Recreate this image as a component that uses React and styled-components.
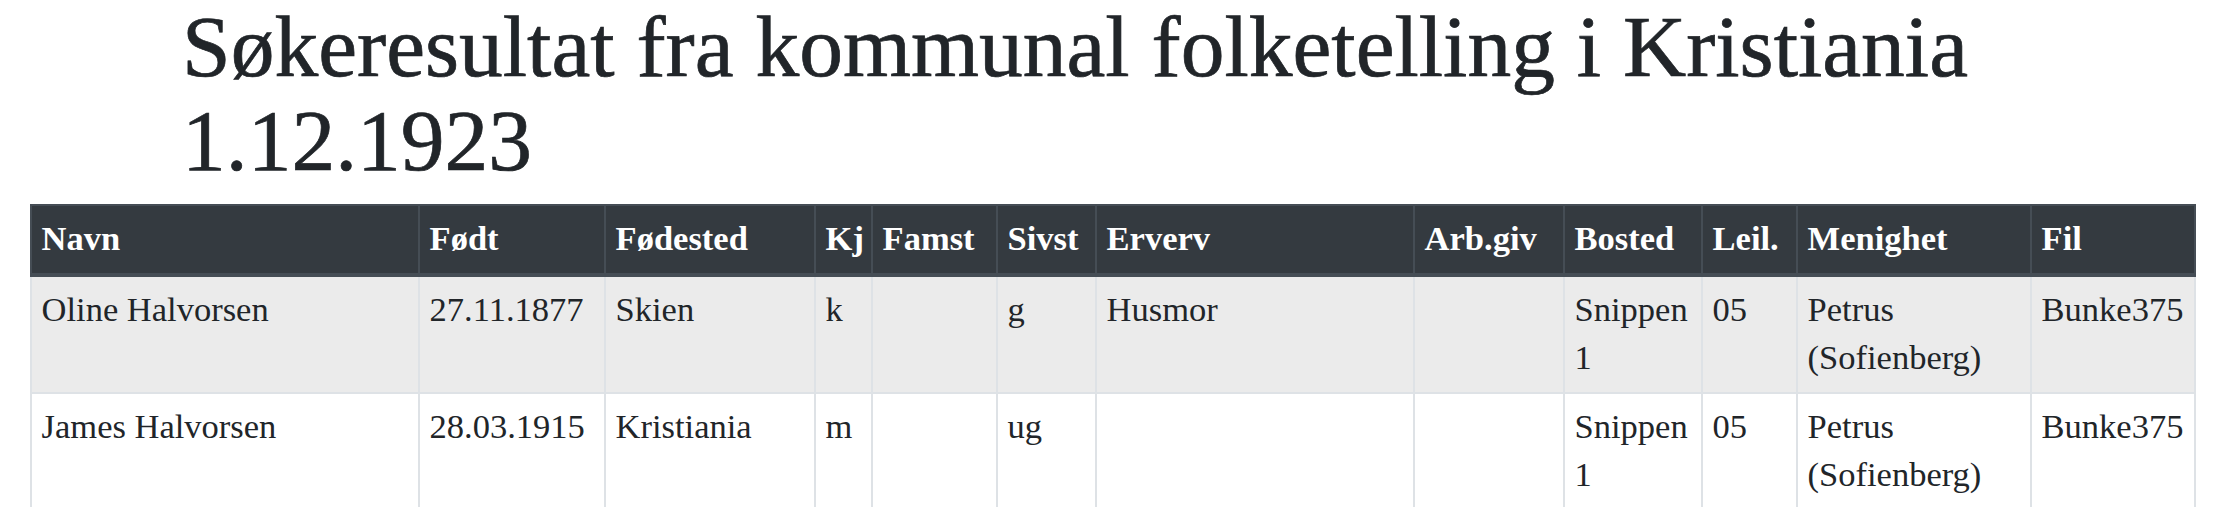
import styled, { createGlobalStyle } from 'styled-components'

const GlobalStyle = createGlobalStyle`
  * {
    box-sizing: border-box;
  }
  body {
    margin: 0;
    background: #fff;
    color: #212529;
    font-family: "Liberation Serif", "Times New Roman", serif;
    font-size: 34.5px;
    line-height: 48px;
  }
`

const Page = styled.div`
  padding: 0 30px;
`

const Title = styled.h1`
  margin: 0 0 16px;
  padding-left: 152px;
  font-family: "Liberation Serif", "Times New Roman", serif;
  font-size: 87.5px;
  font-weight: 400;
  line-height: 94px;
  color: #212529;
  -webkit-text-stroke: 0.7px #212529;
`

const Table = styled.table`
  width: 100%;
  table-layout: fixed;
  border-collapse: collapse;
  border: 2px solid #dee2e6;
`

const HeadCell = styled.th`
  width: ${props => props.$w}px;
  padding: 8px 9.6px 11px;
  text-align: left;
  vertical-align: bottom;
  font-weight: 700;
  color: #fff;
  background: #343a40;
  border: 2px solid #454d55;
  border-bottom-width: 4px;
  white-space: nowrap;
`

const Row = styled.tr`
  background: ${props => (props.$striped ? '#ebebeb' : '#fff')};
`

const Cell = styled.td`
  padding: 8px 9.6px 11px;
  vertical-align: top;
  border: 2px solid #dee2e6;
`

const columns = [
  ['Navn', 388],
  ['Født', 186],
  ['Fødested', 210],
  ['Kj', 57],
  ['Famst', 125],
  ['Sivst', 99],
  ['Erverv', 318],
  ['Arb.giv', 150],
  ['Bosted', 138],
  ['Leil.', 95],
  ['Menighet', 234],
  ['Fil', 164],
]

const people = [
  ['Oline Halvorsen', '27.11.1877', 'Skien', 'k', '', 'g', 'Husmor', '', 'Snippen 1', '05', 'Petrus (Sofienberg)', 'Bunke375'],
  ['James Halvorsen', '28.03.1915', 'Kristiania', 'm', '', 'ug', '', '', 'Snippen 1', '05', 'Petrus (Sofienberg)', 'Bunke375'],
]

export default function App() {
  return (
    <>
      <GlobalStyle />
      <Page>
        <Title>Søkeresultat fra kommunal folketelling i Kristiania 1.12.1923</Title>
        <Table>
          <thead>
            <tr>
              {columns.map(([label, w]) => (
                <HeadCell key={label} $w={w}>{label}</HeadCell>
              ))}
            </tr>
          </thead>
          <tbody>
            {people.map((row, i) => (
              <Row key={i} $striped={i % 2 === 0}>
                {row.map((value, j) => (
                  <Cell key={j}>{value}</Cell>
                ))}
              </Row>
            ))}
          </tbody>
        </Table>
      </Page>
    </>
  )
}
